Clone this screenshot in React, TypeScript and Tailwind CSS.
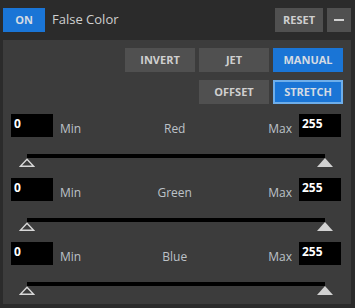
import React from "react";

const font = { fontFamily: '"Open Sans", "Noto Sans", sans-serif' };

function Btn({ label, variant = "gray", w = "w-[70px]" }: { label: string; variant?: "gray" | "blue" | "outline"; w?: string }) {
  const base = `${w} h-[24px] flex items-center justify-center text-[11px] font-bold tracking-[0px]`;
  if (variant === "blue") return <div className={`${base} bg-[#1a75d6] text-[#d4dbe3]`}>{label}</div>;
  if (variant === "outline")
    return <div className={`${base} bg-[#1a75d6] text-[#d4dbe3] border-2 border-[#6eaeea]`}>{label}</div>;
  return <div className={`${base} bg-[#505050] text-[#cfcfcf]`}>{label}</div>;
}

function Thumb({ filled }: { filled?: boolean }) {
  return (
    <svg width="16" height="9" viewBox="0 0 16 9">
      {filled ? (
        <polygon points="8,0 16,9 0,9" fill="#d2d2d2" />
      ) : (
        <polygon points="8,1.2 14.6,8.2 1.4,8.2" fill="#3c3c3c" stroke="#d8d8d8" strokeWidth="1.4" />
      )}
    </svg>
  );
}

function NumBox({ value }: { value: string }) {
  return (
    <div className="w-[42px] h-[23px] bg-black text-white text-[12px] font-bold leading-[16px] pl-[3px] pt-[2px]">
      {value}
    </div>
  );
}

function ChannelRow({ name }: { name: string }) {
  return (
    <div className="h-[64px] flex flex-col">
      <div className="flex items-end pl-[8px] pr-[10px]">
        <NumBox value="0" />
        <span className="ml-[7px] text-[12px] leading-[16px] text-[#bcc2c8]">Min</span>
        <span className="flex-1 text-center text-[12px] leading-[16px] text-[#bcc2c8]">{name}</span>
        <span className="mr-[7px] text-[12px] leading-[16px] text-[#bcc2c8]">Max</span>
        <NumBox value="255" />
      </div>
      <div className="relative mt-[17px] ml-[24px] w-[298px] h-[4px] bg-black">
        <div className="absolute left-[-8px] top-[4px] flex">
          <Thumb />
        </div>
        <div className="absolute right-[-8px] top-[4px] flex">
          <Thumb filled />
        </div>
      </div>
    </div>
  );
}

export default function App() {
  return (
    <div className="w-[355px] h-[308px] bg-[#2b2b2b] overflow-hidden" style={font}>
      <div className="flex items-center pt-[8px] pl-[3px] pr-[4px]">
        <div className="w-[42px] h-[24px] bg-[#1a75d6] text-[#d4dbe3] flex items-center justify-center text-[11px] font-bold">ON</div>
        <span className="ml-[7px] text-[13px] text-[#cfcfcf]">False Color</span>
        <div className="flex-1" />
        <Btn label="RESET" w="w-[48px]" />
        <div className="ml-[4px] w-[24px] h-[24px] bg-[#505050] flex items-center justify-center">
          <div className="w-[10px] h-[2px] bg-[#d0d0d0]" />
        </div>
      </div>
      <div className="mt-[8px] ml-[3px] w-[348px] h-[264px] bg-[#3c3c3c] pt-[8px]">
        <div className="flex justify-end gap-[4px] pr-[8px]">
          <Btn label="INVERT" />
          <Btn label="JET" />
          <Btn label="MANUAL" variant="blue" />
        </div>
        <div className="flex justify-end gap-[4px] pr-[8px] mt-[8px]">
          <Btn label="OFFSET" />
          <Btn label="STRETCH" variant="outline" />
        </div>
        <div className="mt-[10px]">
          <ChannelRow name="Red" />
          <ChannelRow name="Green" />
          <ChannelRow name="Blue" />
        </div>
      </div>
    </div>
  );
}
